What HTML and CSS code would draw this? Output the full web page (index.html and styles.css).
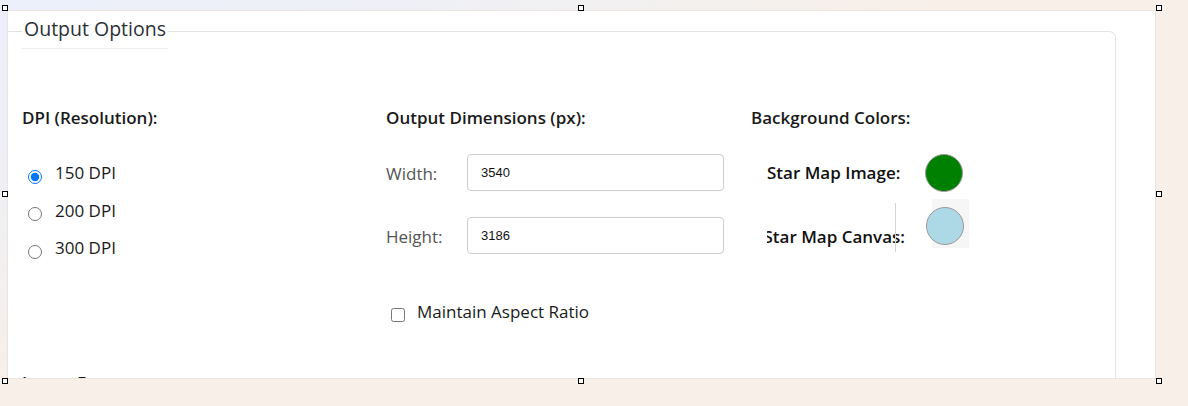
FILE: index.html
```html
<!DOCTYPE html>
<html lang="en">
<head>
<meta charset="utf-8">
<title>Output Options</title>
<link rel="stylesheet" href="styles.css">
</head>
<body>
<div class="stage">
  <div class="panel">
    <fieldset class="options">
      <legend class="options-title">Output Options</legend>
      <div class="columns">
        <div class="col">
          <div class="heading">DPI (Resolution):</div>
          <div class="radio-list">
            <label class="radio-row"><input type="radio" name="dpi" checked><span>150 DPI</span></label>
            <label class="radio-row"><input type="radio" name="dpi"><span>200 DPI</span></label>
            <label class="radio-row"><input type="radio" name="dpi"><span>300 DPI</span></label>
          </div>
        </div>
        <div class="col">
          <div class="heading">Output Dimensions (px):</div>
          <div class="dim-row first">
            <span class="dim-label">Width:</span>
            <input class="dim-input" type="text" value="3540">
          </div>
          <div class="dim-row">
            <span class="dim-label">Height:</span>
            <input class="dim-input" type="text" value="3186">
          </div>
          <label class="check-row"><input type="checkbox"><span>Maintain Aspect Ratio</span></label>
        </div>
        <div class="col">
          <div class="heading">Background Colors:</div>
          <div class="color-row first">
            <span class="color-label">Star Map Image:</span>
            <span class="swatch swatch-green"></span>
          </div>
          <div class="color-row second">
            <span class="color-label clipped"><span>Star Map Canvas:</span></span>
            <span class="swatch-frame"><span class="swatch swatch-blue"></span></span>
            <span class="divider-line"></span>
          </div>
        </div>
      </div>
      <div class="heading next-heading">Image Format:</div>
    </fieldset>
  </div>
  <span class="handle h-tl"></span>
  <span class="handle h-tm"></span>
  <span class="handle h-tr"></span>
  <span class="handle h-ml"></span>
  <span class="handle h-mr"></span>
  <span class="handle h-bl"></span>
  <span class="handle h-bm"></span>
  <span class="handle h-br"></span>
</div>
</body>
</html>
```

FILE: styles.css
```css
html, body {
  margin: 0;
  padding: 0;
}
body {
  width: 1188px;
  height: 406px;
  overflow: hidden;
  background: linear-gradient(158deg, #ecf0fb 0%, #eff0f6 20%, #f3f0ee 32%, #f8efe8 44%, #f8efe9 100%);
  font-family: "Open Sans", "Liberation Sans", sans-serif;
  color: #222;
}
.stage {
  position: relative;
  width: 1188px;
  height: 406px;
  padding: 10px 0 0 7px;
  box-sizing: border-box;
}
.panel {
  width: 1149px;
  height: 369px;
  box-sizing: border-box;
  background: #fff;
  border: 1px solid #ebe4df;
  border-right-color: #e9e3de;
  overflow: hidden;
  padding-top: 3px;
}
.options {
  margin: 0 39px 0 0;
  padding: 0 0 0 14px;
  border: 1px solid #e3e3e3;
  border-left: none;
  border-bottom: none;
  border-radius: 0 7px 0 0;
  min-width: 0;
}
.options-title {
  margin: 0;
  padding: 0 2px 4px;
  font-size: 19.5px;
  line-height: 30px;
  font-weight: 500;
  color: #2b3038;
  border-bottom: 1px solid #eeeeee;
}
.columns {
  display: grid;
  grid-template-columns: 364px 365px 1fr;
  margin-top: 57px;
}
.heading {
  font-size: 17px;
  line-height: 24px;
  font-weight: 600;
  color: #1a1a1a;
}
.radio-list {
  margin-top: 24px;
  display: flex;
  flex-direction: column;
}
.radio-row {
  display: flex;
  align-items: center;
  height: 37.5px;
  font-size: 17px;
  color: #1a1a1a;
}
.radio-row input {
  width: 14px;
  height: 14px;
  margin: 8px 13px 0 6px;
}
.dim-row {
  display: flex;
  align-items: center;
  margin-top: 26px;
}
.dim-row.first {
  margin-top: 24px;
}
.dim-label {
  width: 81px;
  font-size: 17px;
  line-height: 24px;
  color: #555;
  padding-top: 3px;
}
.dim-input {
  width: 257px;
  height: 37px;
  box-sizing: border-box;
  border: 1px solid #cccccc;
  border-radius: 4px;
  padding: 0 13px;
  font-family: "Liberation Sans", Arial, sans-serif;
  font-size: 13px;
  color: #111;
  background: #fff;
}
.check-row {
  display: flex;
  align-items: center;
  margin-top: 46px;
  font-size: 17px;
  line-height: 24px;
  color: #1a1a1a;
}
.check-row input {
  width: 14px;
  height: 14px;
  margin: 6px 12px 0 5px;
}
.color-row {
  display: flex;
  padding-left: 16px;
}
.color-row.first {
  margin-top: 24px;
  align-items: center;
  height: 37px;
}
.color-row.second {
  margin-top: 8px;
  align-items: flex-end;
  position: relative;
  height: 54px;
}
.color-label {
  width: 138px;
  font-size: 17px;
  line-height: 24px;
  font-weight: 600;
  color: #111;
  white-space: nowrap;
}
.color-label.clipped {
  display: flex;
  justify-content: flex-end;
  overflow: hidden;
  margin-bottom: 4px;
}
.swatch {
  display: block;
  width: 38px;
  height: 38px;
  box-sizing: border-box;
  border-radius: 50%;
  border: 1px solid #9a9a9a;
}
.color-row.first .swatch {
  margin-left: 20px;
}
.swatch-green {
  background: #008000;
}
.swatch-blue {
  background: #add8e6;
  margin: 8px 0 0 -6px;
}
.swatch-frame {
  align-self: flex-start;
  display: flex;
  width: 37px;
  height: 49px;
  margin-left: 27px;
  background: #f6f6f6;
}
.divider-line {
  position: absolute;
  left: 144px;
  top: 4px;
  width: 1px;
  height: 49px;
  background: #d4d4d4;
}
.next-heading {
  margin-top: 47px;
}
.handle {
  position: absolute;
  width: 6px;
  height: 6px;
  box-sizing: border-box;
  border: 1px solid #000;
  background: #fff;
}
.h-tl { left: 2px; top: 5px; }
.h-tm { left: 578px; top: 5px; }
.h-tr { left: 1156px; top: 5px; }
.h-ml { left: 2px; top: 191px; }
.h-mr { left: 1156px; top: 191px; }
.h-bl { left: 2px; top: 378px; }
.h-bm { left: 578px; top: 378px; }
.h-br { left: 1156px; top: 378px; }
```
